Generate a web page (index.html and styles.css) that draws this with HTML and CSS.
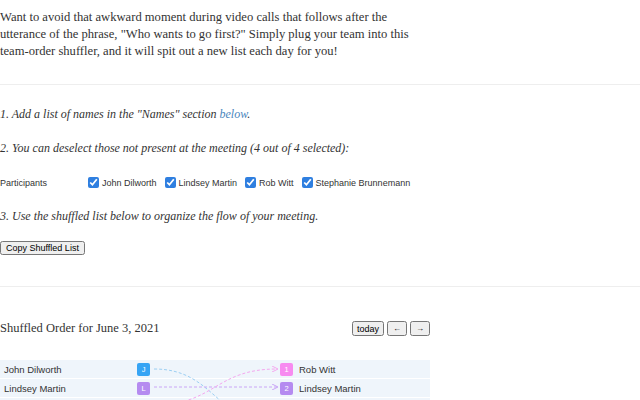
FILE: index.html
```html
<!DOCTYPE html>
<html>
<head>
<meta charset="utf-8">
<link rel="stylesheet" href="styles.css">
</head>
<body>
<div class="intro">
  <p>Want to avoid that awkward moment during video calls that follows after the utterance of the phrase, "Who wants to go first?" Simply plug your team into this team-order shuffler, and it will spit out a new list each day for you!</p>
</div>
<hr class="rule">
<section class="steps">
  <p class="step">1. Add a list of names in the "Names" section <a href="#" class="link">below</a>.</p>
  <p class="step">2. You can deselect those not present at the meeting (4 out of 4 selected):</p>
  <div class="participants">
    <span class="plabel">Participants</span>
    <label class="check"><input type="checkbox" checked> John Dilworth</label>
    <label class="check"><input type="checkbox" checked> Lindsey Martin</label>
    <label class="check"><input type="checkbox" checked> Rob Witt</label>
    <label class="check"><input type="checkbox" checked> Stephanie Brunnemann</label>
  </div>
  <p class="step last">3. Use the shuffled list below to organize the flow of your meeting.</p>
  <button class="copy">Copy Shuffled List</button>
</section>
<hr class="rule">
<section class="shuffle">
  <div class="head">
    <h2 class="title">Shuffled Order for June 3, 2021</h2>
    <div class="nav">
      <button class="navbtn">today</button>
      <button class="navbtn arrow">&larr;</button>
      <button class="navbtn arrow">&rarr;</button>
    </div>
  </div>
  <div class="board">
    <div class="row"><span class="lname">John Dilworth</span><span class="badge blue">J</span><span class="gap"></span><span class="badge pink">1</span><span class="rname">Rob Witt</span></div>
    <div class="row"><span class="lname">Lindsey Martin</span><span class="badge purple">L</span><span class="gap"></span><span class="badge purple">2</span><span class="rname">Lindsey Martin</span></div>
    <div class="row"><span class="lname">Rob Witt</span><span class="badge pink">R</span><span class="gap"></span><span class="badge red">3</span><span class="rname">Stephanie Brunnemann</span></div>
    <div class="row"><span class="lname">Stephanie Brunnemann</span><span class="badge red">S</span><span class="gap"></span><span class="badge blue">4</span><span class="rname">John Dilworth</span></div>
    <svg class="links" width="430" height="80" viewBox="0 0 430 80">
      <defs>
        <marker id="ap" markerWidth="6" markerHeight="6" refX="5" refY="3" orient="auto"><path d="M0,0 L6,3 L0,6" fill="none" stroke="#f4a8ef" stroke-width="1"/></marker>
        <marker id="au" markerWidth="6" markerHeight="6" refX="5" refY="3" orient="auto"><path d="M0,0 L6,3 L0,6" fill="none" stroke="#c9a6f6" stroke-width="1"/></marker>
        <marker id="ab" markerWidth="6" markerHeight="6" refX="5" refY="3" orient="auto"><path d="M0,0 L6,3 L0,6" fill="none" stroke="#9ccff3" stroke-width="1"/></marker>
        <marker id="ar" markerWidth="6" markerHeight="6" refX="5" refY="3" orient="auto"><path d="M0,0 L6,3 L0,6" fill="none" stroke="#f3a5a5" stroke-width="1"/></marker>
      </defs>
      <path d="M154,9 C215,9 215,63 277,63" fill="none" stroke="#9ccff3" stroke-width="1" stroke-dasharray="3,2" marker-end="url(#ab)"/>
      <path d="M154,27 L277,27" fill="none" stroke="#c9a6f6" stroke-width="1" stroke-dasharray="3,2" marker-end="url(#au)"/>
      <path d="M154,45 C215,45 215,9 277,9" fill="none" stroke="#f4a8ef" stroke-width="1" stroke-dasharray="3,2" marker-end="url(#ap)"/>
      <path d="M154,63 C215,63 215,45 277,45" fill="none" stroke="#f3a5a5" stroke-width="1" stroke-dasharray="3,2" marker-end="url(#ar)"/>
    </svg>
  </div>
</section>
</body>
</html>
```
FILE: styles.css
```css
body {
  margin: 0;
  color: #333;
  font-family: "Liberation Serif", serif;
  background: #fff;
}
.intro {
  padding: 9px 0 24px 0;
  width: 420px;
}
.intro p {
  margin: 0;
  font-size: 12.6px;
  line-height: 17px;
}
.rule {
  border: 0;
  border-top: 1px solid #eeeeee;
  margin: 0;
  height: 0;
}
.steps {
  padding-top: 21px;
  padding-bottom: 31px;
}
.step {
  margin: 0 0 17px 0;
  font-style: italic;
  font-size: 12px;
  line-height: 17px;
}
.step.last {
  margin-bottom: 16px;
}
.link {
  color: #4a86bd;
  text-decoration: none;
}
.participants {
  display: flex;
  align-items: center;
  height: 17px;
  font-family: "Liberation Sans", Arial, sans-serif;
  font-size: 9px;
  margin: 0 0 17px 0;
}
.plabel {
  width: 88px;
}
.check {
  display: flex;
  align-items: center;
  margin-right: 8px;
}
.check input {
  width: 11px;
  height: 11px;
  margin: 0 3px 0 0;
  accent-color: #2f7fe0;
}
.copy {
  font-family: "Liberation Sans", Arial, sans-serif;
  font-size: 9px;
  padding: 0 4px;
  height: 14px;
  margin: 0;
  display: block;
}
.shuffle {
  width: 430px;
  padding-top: 33px;
}
.head {
  display: flex;
  justify-content: space-between;
  align-items: center;
  height: 17px;
}
.title {
  margin: 0;
  font-weight: normal;
  font-size: 12.5px;
  line-height: 17px;
}
.nav {
  display: flex;
  gap: 3px;
}
.navbtn {
  font-family: "Liberation Sans", Arial, sans-serif;
  font-size: 9px;
  padding: 0 3px;
  height: 15px;
  margin: 0;
}
.arrow {
  width: 20px;
  font-size: 8px;
}
.board {
  position: relative;
  margin-top: 23px;
  display: flex;
  flex-direction: column;
  gap: 1px;
  font-family: "Liberation Sans", Arial, sans-serif;
  font-size: 9.5px;
}
.row {
  display: flex;
  align-items: center;
  height: 18px;
  background: #eff5fb;
}
.lname {
  width: 133px;
  padding-left: 4px;
}
.gap {
  width: 130px;
}
.rname {
  padding-left: 6px;
}
.badge {
  width: 13px;
  height: 13px;
  border-radius: 2px;
  color: #fff;
  font-size: 7.5px;
  display: flex;
  align-items: center;
  justify-content: center;
}
.blue { background: #36a4f4; }
.purple { background: #b58bf0; }
.pink { background: #f78bf0; }
.red { background: #f07f7f; }
.links {
  position: absolute;
  left: 0;
  top: 0;
  pointer-events: none;
}
```
